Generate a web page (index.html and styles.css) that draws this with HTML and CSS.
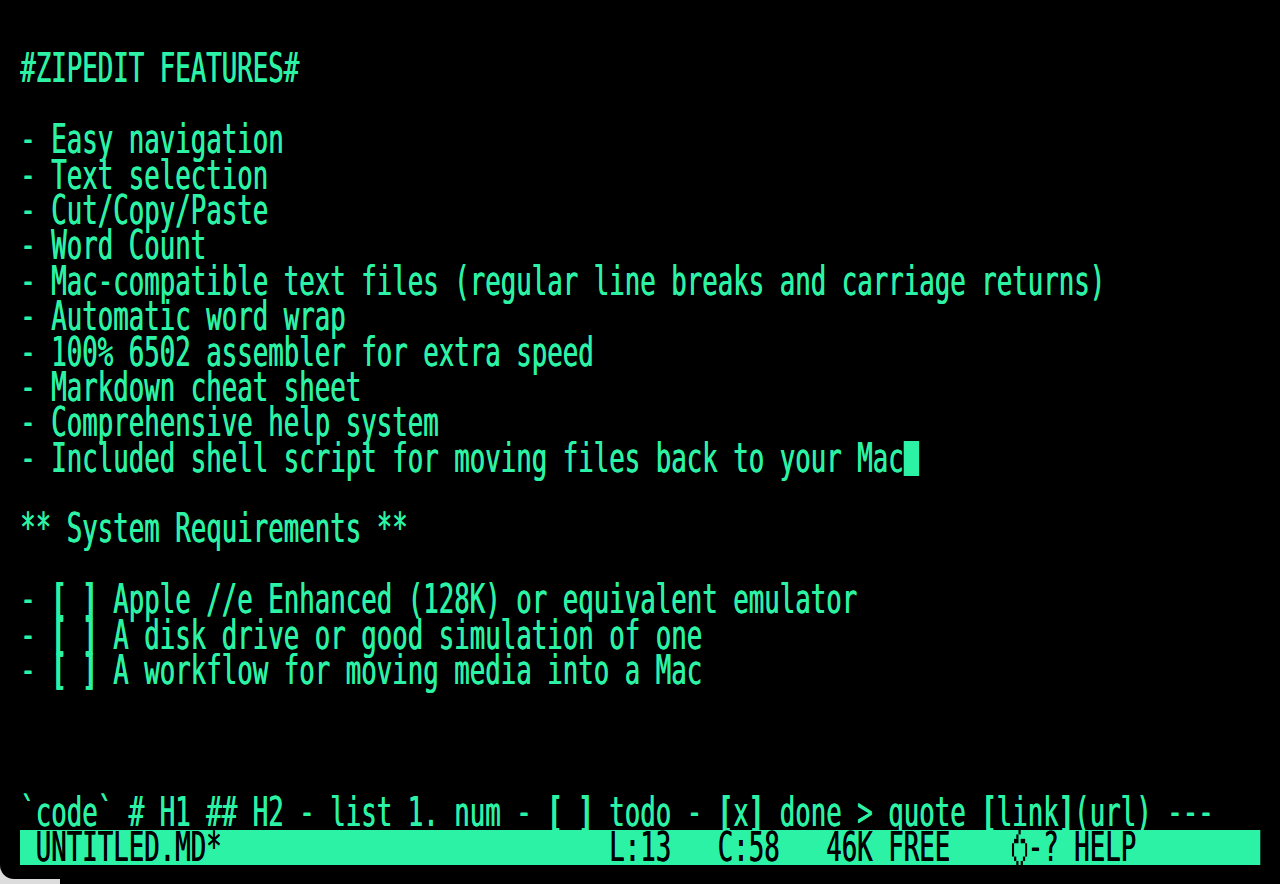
FILE: index.html
```html
<!DOCTYPE html>
<html lang="en">
<head>
<meta charset="utf-8">
<title>ZipEdit</title>
<link rel="stylesheet" href="styles.css">
</head>
<body>
<div class="screen">
  <div class="text">
    <div class="row"> </div>
    <div class="row">#ZIPEDIT FEATURES#</div>
    <div class="row"> </div>
    <div class="row">- Easy navigation</div>
    <div class="row">- Text selection</div>
    <div class="row">- Cut/Copy/Paste</div>
    <div class="row">- Word Count</div>
    <div class="row">- Mac-compatible text files (regular line breaks and carriage returns)</div>
    <div class="row">- Automatic word wrap</div>
    <div class="row">- 100% 6502 assembler for extra speed</div>
    <div class="row">- Markdown cheat sheet</div>
    <div class="row">- Comprehensive help system</div>
    <div class="row">- Included shell script for moving files back to your Mac<span class="cursor"> </span></div>
    <div class="row"> </div>
    <div class="row">** System Requirements **</div>
    <div class="row"> </div>
    <div class="row">- <span class="br">[</span> <span class="br">]</span> Apple //e Enhanced (128K) or equivalent emulator</div>
    <div class="row">- <span class="br">[</span> <span class="br">]</span> A disk drive or good simulation of one</div>
    <div class="row">- <span class="br">[</span> <span class="br">]</span> A workflow for moving media into a Mac</div>
    <div class="row"> </div>
    <div class="row"> </div>
    <div class="row"> </div>
    <div class="row">`code` # H1 ## H2 - list 1. num - <span class="br">[</span> <span class="br">]</span> todo - <span class="br">[</span>x<span class="br">]</span> done &gt; quote <span class="br">[</span>link<span class="br">]</span>(url) ---</div>
    <div class="row status"> UNTITLED.MD*                         L:13   C:58   46K FREE    <svg class="apple" viewBox="0 0 7 8" preserveAspectRatio="none"><rect x="3" y="0" width="1" height="1"/><rect x="2" y="1" width="1" height="1"/><rect x="1" y="2" width="2" height="1"/><rect x="4" y="2" width="2" height="1"/><rect x="0" y="3" width="1" height="3"/><rect x="6" y="3" width="1" height="3"/><rect x="1" y="6" width="1" height="1"/><rect x="5" y="6" width="1" height="1"/><rect x="2" y="7" width="1" height="1"/><rect x="4" y="7" width="1" height="1"/></svg>-? HELP</div>
  </div>
</div>
</body>
</html>
```

FILE: styles.css
```css
html, body {
  margin: 0;
  padding: 0;
}

body {
  width: 1280px;
  height: 884px;
  overflow: hidden;
  background: linear-gradient(to right, #dcdcdc 0 60px, #000 60px);
}

.screen {
  box-sizing: border-box;
  width: 1280px;
  height: 879px;
  padding: 16px 20px 0;
  background: #000;
  border-bottom-left-radius: 14px;
  overflow: hidden;
}

.text {
  width: 1926.56px;
  transform: scaleX(0.64364);
  transform-origin: 0 0;
  font-family: "DejaVu Sans Mono", monospace;
  font-size: 40px;
  line-height: 35.4px;
  color: #2cf2a6;
}

.row {
  height: 35.4px;
  white-space: pre;
  text-shadow: 0.6px 0 0 currentColor;
}

.br {
  font-weight: bold;
}

.cursor {
  display: inline-block;
  width: 1ch;
  height: 35.4px;
  vertical-align: top;
  background: #2cf2a6;
}

.status {
  background: #2cf2a6;
  color: #000;
}

.apple {
  display: inline-block;
  width: 1ch;
  height: 35.4px;
  vertical-align: top;
  fill: #000;
}
```
